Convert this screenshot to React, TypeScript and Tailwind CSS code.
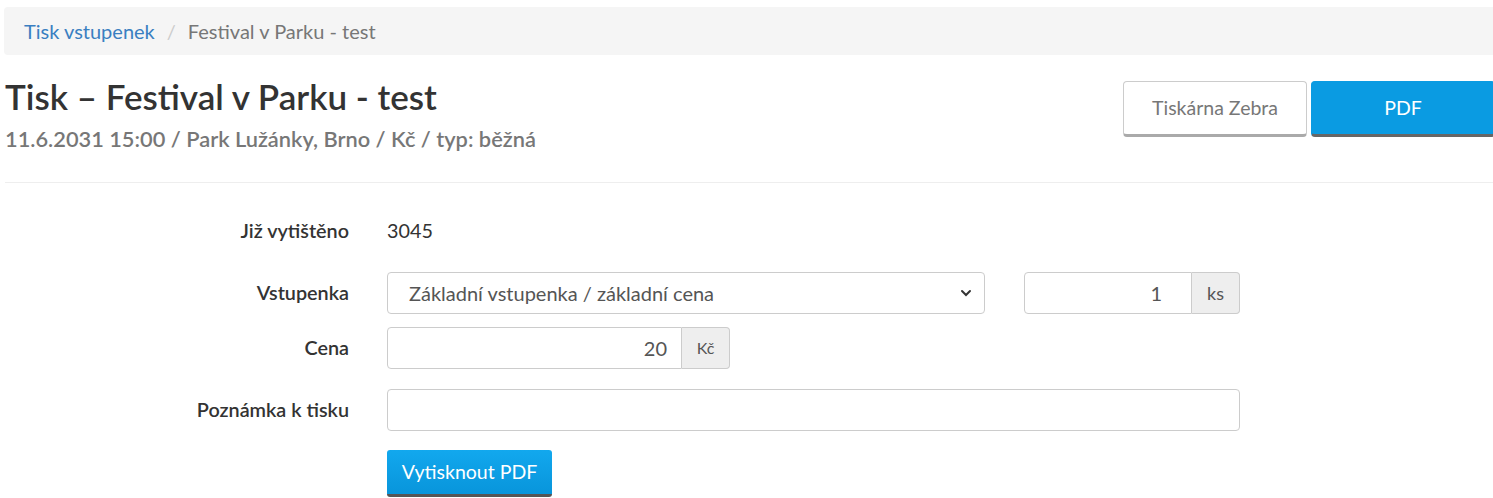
import React from "react";

const font = { fontFamily: "Lato, 'Open Sans', sans-serif" };

function FormRow({
  label,
  children,
  className = "",
}: {
  label: string;
  children: React.ReactNode;
  className?: string;
}) {
  return (
    <div className={`flex items-center ${className}`}>
      <label className="w-[345px] shrink-0 text-right text-[19.8px] font-semibold text-[#333]">
        {label}
      </label>
      <div className="ml-[38px] flex items-center">{children}</div>
    </div>
  );
}

export default function App() {
  return (
    <div className="h-[498px] w-[1493px] overflow-hidden bg-white" style={font}>
      <div className="w-[1500px] pl-[4px]">
        {/* Breadcrumb */}
        <nav className="mt-[7px] flex h-[48px] items-center rounded-[4px] bg-[#f5f5f5] pl-[20px] text-[20px]">
          <a className="text-[#3a7fc1]">Tisk vstupenek</a>
          <span className="px-[12px] text-[#ccc]">/</span>
          <span className="text-[#777]">Festival v Parku - test</span>
        </nav>

        {/* Header */}
        <div className="flex items-start justify-between pl-[1px]">
          <div className="pt-[21px]">
            <h1 className="text-[35px] font-semibold leading-[40px] text-[#333]">
              Tisk – Festival v Parku - test
            </h1>
            <p className="mt-[9px] text-[21.8px] font-semibold leading-[28px] text-[#777]">
              11.6.2031 15:00 / Park Lužánky, Brno / Kč / typ: běžná
            </p>
          </div>
          <div className="mt-[26px] flex gap-[4px] pr-[5px]">
            <button className="h-[56px] w-[184px] rounded-[4px] border border-[#ccc] border-b-[3px] border-b-[#aaa] bg-white text-[19.5px] text-[#777]">
              Tiskárna Zebra
            </button>
            <button className="h-[56px] w-[184px] rounded-[4px] border border-[#0a9be2] border-b-[3px] border-b-[#666] bg-[#0a9be2] text-[19.5px] text-white">
              PDF
            </button>
          </div>
        </div>

        <hr className="ml-[1px] mt-[29px] border-t border-[#eee]" />

        {/* Form */}
        <div className="pt-[24px]">
          <FormRow label="Již vytištěno" className="h-[47px]">
            <span className="text-[19.8px] text-[#333]">3045</span>
          </FormRow>

          <FormRow label="Vstupenka" className="mt-[18px] h-[42px]">
            <div className="flex h-[42px] w-[598px] items-center justify-between rounded-[4px] border border-[#ccc] pl-[21px] pr-[12px] text-[20px] text-[#555]">
              <span>Základní vstupenka / základní cena</span>
              <svg width="12" height="12" viewBox="0 0 12 12" fill="none">
                <path d="M2 4l4 4 4-4" stroke="#333" strokeWidth="2" strokeLinecap="round" />
              </svg>
            </div>
            <div className="ml-[39px] flex h-[42px] w-[216px]">
              <div className="flex flex-1 items-center justify-end rounded-l-[4px] border border-[#ccc] pr-[29px] text-[20px] text-[#555]">
                1
              </div>
              <div className="flex w-[48px] items-center justify-center rounded-r-[4px] border border-l-0 border-[#ccc] bg-[#eee] text-[18px] text-[#555]">
                ks
              </div>
            </div>
          </FormRow>

          <FormRow label="Cena" className="mt-[13px] h-[42px]">
            <div className="flex h-[42px] w-[343px]">
              <div className="flex flex-1 items-center justify-end rounded-l-[4px] border border-[#ccc] pr-[14px] text-[20px] text-[#555]">
                20
              </div>
              <div className="flex w-[48px] items-center justify-center rounded-r-[4px] border border-l-0 border-[#ccc] bg-[#eee] text-[16px] text-[#555]">
                Kč
              </div>
            </div>
          </FormRow>

          <FormRow label="Poznámka k tisku" className="mt-[20px] h-[42px]">
            <div className="h-[42px] w-[853px] rounded-[4px] border border-[#ccc]" />
          </FormRow>

          <div className="ml-[383px] mt-[19px]">
            <button className="h-[47px] w-[165px] rounded-[3px] border-b-[3px] border-b-[#555] bg-gradient-to-b from-[#12a8ee] to-[#0895db] text-[19.5px] text-white">
              Vytisknout PDF
            </button>
          </div>
        </div>
      </div>
    </div>
  );
}
